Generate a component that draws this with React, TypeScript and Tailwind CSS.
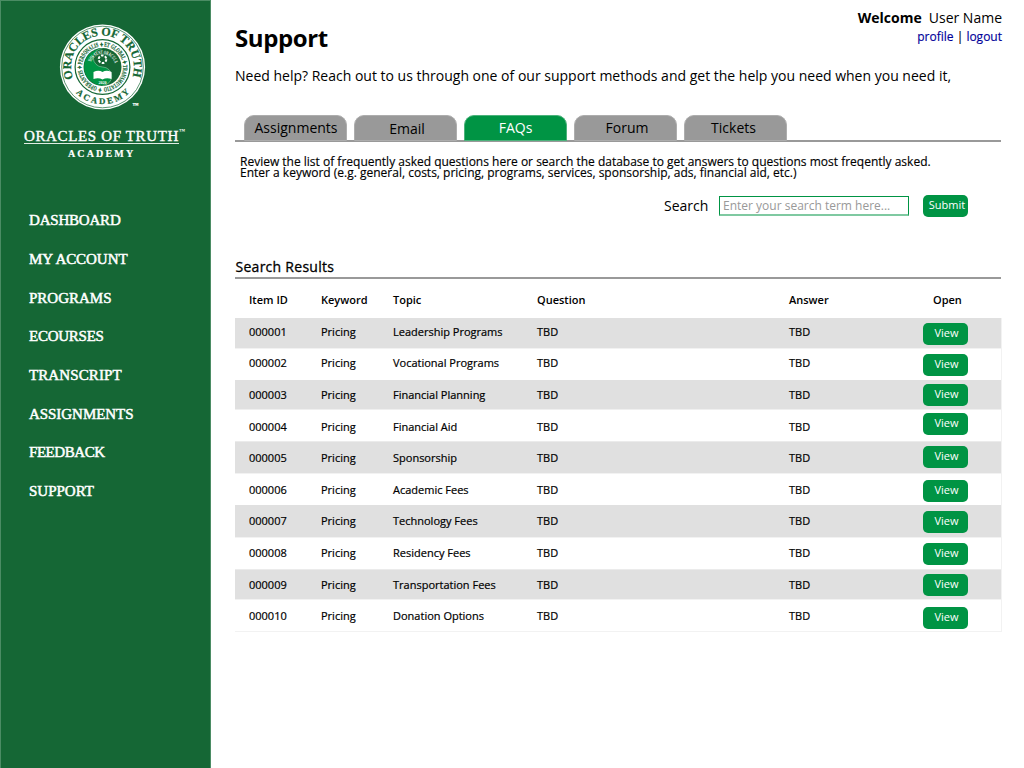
const NAV = [
  { label: "DASHBOARD", cls: "tracking-[-0.2px]" },
  { label: "MY ACCOUNT", cls: "tracking-[-0.05px]" },
  { label: "PROGRAMS", cls: "pt-px" },
  { label: "ECOURSES", cls: "tracking-[-0.25px]" },
  { label: "TRANSCRIPT", cls: "tracking-[0.1px]" },
  { label: "ASSIGNMENTS", cls: "pt-px tracking-[-0.05px]" },
  { label: "FEEDBACK", cls: "tracking-[-0.45px]" },
  { label: "SUPPORT", cls: "" },
];

const TABS = [
  { label: "Assignments", pad: "pt-0 pl-px" },
  { label: "Email", pad: "pt-px pl-[3px]" },
  { label: "FAQs", active: true, pad: "pt-0" },
  { label: "Forum", pad: "pl-[3px]" },
  { label: "Tickets", pad: "pr-[4px]" },
];

const ROWS = [
  { id: "000001", topic: "Leadership Programs", row: "h-[30px] bg-[#e0e0e0]", text: "pt-[6px]", btn: "pt-[5px]" },
  { id: "000002", topic: "Vocational Programs", row: "h-[32px] border-t border-[#f2f2f2]", text: "pt-[6px]", btn: "pt-[5px]" },
  { id: "000003", topic: "Financial Planning", row: "h-[29px] bg-[#e0e0e0]", text: "pt-[7px]", btn: "pt-[4px]" },
  { id: "000004", topic: "Financial Aid", row: "h-[32px] border-t border-[#efefef]", text: "pt-[9px]", btn: "pt-[3px]" },
  { id: "000005", topic: "Sponsorship", row: "h-[32px] bg-[#e0e0e0] border-t border-[#ebebeb]", text: "pt-[8px]", btn: "pt-[4px]" },
  { id: "000006", topic: "Academic Fees", row: "h-[32px] border-t border-[#f2f2f2]", text: "pt-[8px]", btn: "pt-[6px]" },
  { id: "000007", topic: "Technology Fees", row: "h-[32px] bg-[#e0e0e0]", text: "pt-[8px]", btn: "pt-[6px]" },
  { id: "000008", topic: "Residency Fees", row: "h-[32px] border-t border-[#f2f2f2]", text: "pt-[7px]", btn: "pt-[5px]" },
  { id: "000009", topic: "Transportation Fees", row: "h-[30px] bg-[#e0e0e0] border-t border-[#ebebeb]", text: "pt-[7px]", btn: "pt-[4px]" },
  { id: "000010", topic: "Donation Options", row: "h-[33px] border-y border-[#f2f2f2]", text: "pt-[8px]", btn: "pt-[7px]" },
];

const COLS = "grid grid-cols-[72px_72px_144px_252px_134px_1fr] pl-[14px]";

function Seal() {
  return (
    <svg className="h-[88px] w-[88px]" viewBox="-44.5 -44 88 88" fontFamily="'Liberation Serif', serif">
      <defs>
        <path id="outerTop" d="M -29.2 11.5 A 31.4 31.4 0 1 1 29.2 11.5" />
        <path id="outerBottom" d="M -31 20.5 A 37.2 37.2 0 0 0 31 20.5" />
        <path id="inner" d="M 0 20.6 A 20.6 20.6 0 1 1 0.1 20.6" />
        <path id="motto" d="M -11.5 -5 A 12.5 12.5 0 0 1 12.3 2.4" />
      </defs>
      <circle r="42.6" fill="#fff" />
      <circle r="40.8" fill="none" stroke="#156735" strokeWidth="0.7" />
      <circle r="27.4" fill="#fff" stroke="#156735" strokeWidth="1.2" />
      <g fill="#156735" stroke="#156735" strokeWidth="0.2" fontWeight="700">
        <text fontSize="12">
          <textPath href="#outerTop" textLength="120" startOffset="0">ORACLES OF TRUTH</textPath>
        </text>
        <text fontSize="8.8">
          <textPath href="#outerBottom" textLength="60" startOffset="7">ACADEMY</textPath>
        </text>
        <text fontSize="6.4">
          <textPath href="#inner" textLength="127" startOffset="1" lengthAdjust="spacingAndGlyphs">✦ OPERANTIS ✦ PERSONALIS ✦ ET GLOBAL ✦ TRANSMUTATIO</textPath>
        </text>
      </g>
      <circle r="19" fill="#156735" />
      <path d="M 0 -18.4 A 18.4 18.4 0 0 0 0 18.4 A 9.2 9.2 0 0 0 0 0 A 9.2 9.2 0 0 1 0 -18.4" fill="#009444" />
      <path d="M 0 18.4 A 9.2 9.2 0 0 0 0 0 A 9.2 9.2 0 0 1 0 -18.4" fill="none" stroke="#8fc9a6" strokeWidth="0.6" />
      <text fontSize="5.4" fontWeight="700" fill="#fff">
        <textPath href="#motto" textLength="31" lengthAdjust="spacingAndGlyphs">NOS SUNT ORACULA</textPath>
      </text>
      <circle cy="-7.8" r="3.8" fill="none" stroke="#fff" strokeWidth="2" strokeDasharray="2.6 1.38" />
      <path d="M -9 5 Q -4 2.6 0 5 Q 4 2.6 9 5 V 12 Q 4 10.5 0 12.4 Q -4 10.5 -9 12 Z" fill="#fff" />
      <text x="0" y="17" fontSize="4" fontWeight="700" fill="#fff" textAnchor="middle">2020</text>
      <text x="30" y="39.8" fontSize="6" fontWeight="700" fill="#fff" stroke="#fff" strokeWidth="0.2">™</text>
    </svg>
  );
}

function Button({ label, pad }: { label: string; pad: string }) {
  return (
    <button className={`flex h-[22px] w-[45px] justify-center rounded-[5px] bg-[#009444] text-[11px] leading-5 text-white ${pad}`}>{label}</button>
  );
}

export default function App() {
  return (
    <div className="flex h-[768px] w-[1024px] overflow-hidden bg-white font-['Open_Sans',sans-serif] text-black">
      <aside className="h-full w-[211px] shrink-0 border-x border-t border-[#4b8c64] bg-[#156735] font-['Liberation_Serif',serif] text-white">
        <div className="flex flex-col pl-[57px] pt-[22px]">
          <Seal />
        </div>
        <div className="flex h-[34px] pl-[23px] pt-[16px]">
          <span className="h-[17px] w-[155px] whitespace-nowrap border-b border-[#e0ece4] text-[15px] leading-[19px] tracking-[0.64px] [-webkit-text-stroke:0.4px_white]">ORACLES OF TRUTH</span>
          <span className="text-[6px] font-bold leading-[9px]">™</span>
        </div>
        <div className="pl-[67px] pt-[2px] text-[10px] font-bold leading-[13px] tracking-[2.15px] [-webkit-text-stroke:0.2px_white]">ACADEMY</div>
        <nav className="flex flex-col pl-[28px] pt-[41px] text-[15px] [-webkit-text-stroke:0.5px_white]">
          {NAV.map((n) => (
            <a key={n.label} className={`h-[38.7px] leading-[38.7px] ${n.cls}`}>{n.label}</a>
          ))}
        </nav>
      </aside>

      <main className="flex w-[791px] flex-col pl-6">
        <header className="flex h-[62px] justify-between">
          <h1 className="pt-[22px] text-[24px] font-bold leading-8 tracking-[-0.4px]">Support</h1>
          <div className="pt-[8px] text-right">
            <div className="text-[14px] leading-5"><b>Welcome</b><span className="pl-[7px]">User Name</span></div>
            <div className="text-[12px] leading-[18px] [-webkit-text-stroke:0.15px]"><a className="text-[#000099]">profile</a> | <a className="text-[#000099]">logout</a></div>
          </div>
        </header>
        <p className="h-[53px] whitespace-nowrap pt-[4px] text-[14px] leading-5">Need help? Reach out to us through one of our support methods and get the help you need when you need it,</p>
        <div className="mr-px flex h-[27px] gap-[7px] border-b-2 border-[#999] pl-[9px]">
          {TABS.map((t) => (
            <div key={t.label} className={`h-[26px] w-[103px] rounded-t-[10px] border text-center text-[14px] leading-6 ${t.pad} ${t.active ? "border-[#4bb27b] bg-[#009444] text-white" : "border-[#adadad] bg-[#999]"}`}>{t.label}</div>
          ))}
        </div>
        <p className="h-[53px] whitespace-nowrap pl-[5px] pt-[14px] text-[12px] leading-[11px] [-webkit-text-stroke:0.15px_black]">
          Review the list of frequently asked questions here or search the database to get answers to questions most freqently asked.<br />
          Enter a keyword (e.g. general, costs, pricing, programs, services, sponsorship, ads, financial aid, etc.)
        </p>
        <div className="flex h-[62px] pl-[429px]">
          <label className="w-[55px] text-[14px] leading-[22px]">Search</label>
          <input className="mt-px h-[20px] w-[190px] border border-b-2 border-[#009444] border-b-[#7fc9a1] pl-[3px] text-[12px] placeholder-[#999]" placeholder="Enter your search term here..." />
          <div className="pl-[14px]"><Button label="Submit" pad="pl-[3px]" /></div>
        </div>
        <h2 className="mr-px h-[22px] border-b-2 border-[#999] pl-[0.5px] text-[14px] leading-5 tracking-[0.27px] [-webkit-text-stroke:0.3px_black]">Search Results</h2>
        <div className={`h-[39px] text-[11px] font-semibold leading-[41px] ${COLS}`}>
          <span>Item ID</span><span>Keyword</span><span>Topic</span><span>Question</span><span>Answer</span><span className="pl-[10px]">Open</span>
        </div>
        <div className="border-r border-[#f2f2f2]">
          {ROWS.map((r) => (
            <div key={r.id} className={`${COLS} ${r.row} text-[11px] leading-4 [-webkit-text-stroke:0.2px_black]`}>
              <span className={r.text}>{r.id}</span>
              <span className={r.text}>Pricing</span>
              <span className={r.text}>{r.topic}</span>
              <span className={r.text}>TBD</span>
              <span className={r.text}>TBD</span>
              <div className={`[-webkit-text-stroke:0] ${r.btn}`}><Button label="View" pad="pl-[2px]" /></div>
            </div>
          ))}
        </div>
      </main>
    </div>
  );
}
